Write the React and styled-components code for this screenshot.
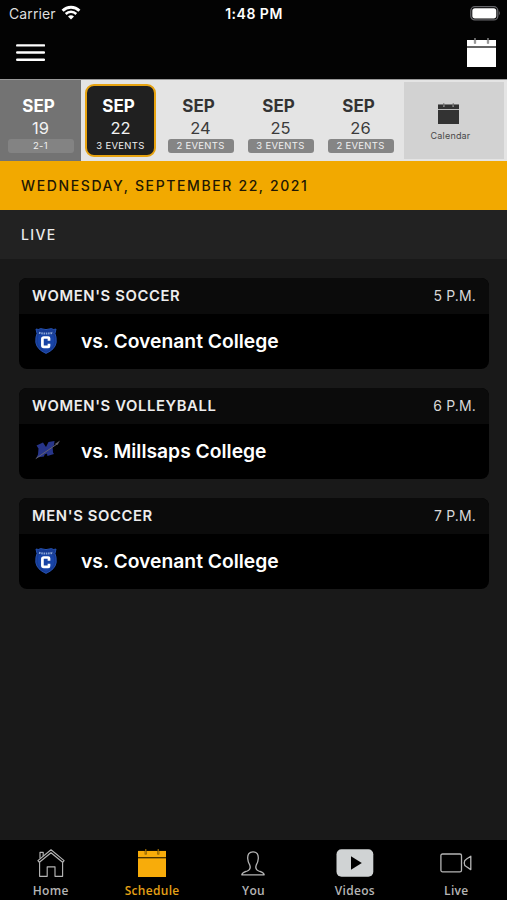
import styled, { createGlobalStyle, css } from 'styled-components';

const days = [
    { month: 'SEP', day: '19', label: '2-1', past: true },
    { month: 'SEP', day: '22', label: '3 EVENTS', selected: true },
    { month: 'SEP', day: '24', label: '2 EVENTS' },
    { month: 'SEP', day: '25', label: '3 EVENTS' },
    { month: 'SEP', day: '26', label: '2 EVENTS' },
];

const events = [
    { sport: "WOMEN'S SOCCER", time: '5 P.M.', title: 'vs. Covenant College', logo: 'covenant' },
    { sport: "WOMEN'S VOLLEYBALL", time: '6 P.M.', title: 'vs. Millsaps College', logo: 'millsaps' },
    { sport: "MEN'S SOCCER", time: '7 P.M.', title: 'vs. Covenant College', logo: 'covenant' },
];

// icons
const WifiIcon = () => (
    <svg width='20' height='16' viewBox='0 0 20 16' fill='none' stroke='#fff'>
        <path d='M1.6 5.7 A12 12 0 0 1 18.4 5.7' strokeWidth='2.9' />
        <path d='M4.7 9 A7.6 7.6 0 0 1 15.3 9' strokeWidth='2.5' />
        <path d='M10 14.6 L7 11.6 A4.3 4.3 0 0 1 13 11.6 Z' fill='#fff' stroke='none' />
    </svg>
);

const BatteryIcon = () => (
    <svg width='31' height='15' viewBox='0 0 31 15'>
        <rect x='0.8' y='0.7' width='27' height='13.2' rx='4' fill='none' stroke='#66666a' strokeWidth='1.3' />
        <rect x='2.3' y='2.2' width='24' height='10.2' rx='2.6' fill='#fff' />
        <path d='M28.9 5 Q30.8 7.2 28.9 9.4 Z' fill='#66666a' />
    </svg>
);

const MenuIcon = () => (
    <svg width='29' height='19' viewBox='0 0 29 19' stroke='#fff' strokeWidth='2.4' strokeLinecap='round'>
        <path d='M1.2 2.4 H28 M1.2 9.5 H28 M1.2 16.8 H28' />
    </svg>
);

const CalendarIcon = ({ width, height, color, line }) => (
    <svg width={width} height={height} viewBox='0 0 29 29' preserveAspectRatio='none'>
        <path d='M0 2 H29 V29 H0 Z' fill={color} />
        <path d='M0 9 H29' stroke={line} strokeWidth='1.4' />
        <path d='M8 2 V5.6 M21 2 V5.6' stroke={line} strokeWidth='2.2' opacity='0.75' />
        <path d='M8 0 V5 M21 0 V5' stroke={color} strokeWidth='1.4' opacity='0.55' />
    </svg>
);

const HomeIcon = () => (
    <svg width='28' height='28' viewBox='0 0 28 28' fill='none' stroke='#b5b5b5' strokeWidth='1.15' strokeLinejoin='round'>
        <path d='M0.9 11.6 L14 0.8 L27.1 11.6 L25.6 13.3 L14 3.8 L2.4 13.3 Z' />
        <path d='M3 9.5 V3.3 H6.2 V7' />
        <path d='M2.6 13.2 V27.3 H10.2 V17.8 H18 V27.3 H25.6 V13.2' />
    </svg>
);

const UserIcon = () => (
    <svg width='24' height='25' viewBox='0 0 24 25' fill='none' stroke='#b5b5b5' strokeWidth='1.3' strokeLinejoin='round'>
        <path d='M12 0.8 C8.1 0.8 6.5 3.6 6.7 7.5 C6.9 11 7.8 12.6 8.8 14.2 C10 17.6 8.8 19 6.3 20 C3.6 21 1.2 21.4 0.8 23.8 H23.2 C22.8 21.4 20.4 21 17.7 20 C15.2 19 14 17.6 15.2 14.2 C16.2 12.6 17.1 11 17.3 7.5 C17.5 3.6 15.9 0.8 12 0.8 Z' />
    </svg>
);

const VideosIcon = () => (
    <svg width='38' height='28' viewBox='0 0 38 28'>
        <rect x='0.5' y='0.3' width='36.8' height='27.4' rx='5' fill='#d0d3d4' />
        <path d='M15 7.2 L25.8 14 L15 20.8 Z' fill='#000' />
    </svg>
);

const LiveIcon = () => (
    <svg width='32' height='20' viewBox='0 0 32 20' fill='none' stroke='#b5b5b5' strokeWidth='1.3' strokeLinejoin='round'>
        <rect x='0.9' y='1' width='20.6' height='17.8' rx='1.6' />
        <path d='M30.8 3.2 V16.6 L26.2 13.5 C23.6 12.3 23.6 7.5 26.2 6.3 Z' />
    </svg>
);

const CovenantLogo = () => (
    <svg width='22' height='26' viewBox='0 0 22 26'>
        <path d='M1 1 Q3.4 2.2 5.6 0.6 Q11 2.6 16.4 0.6 Q18.6 2.2 21 1 L20 5.6 Q21.6 9 21.2 14.5 Q20 21.6 11 25.4 Q2 21.6 0.8 14.5 Q0.4 9 2 5.6 Z' fill='#173b93' stroke='#2957bb' strokeWidth='0.9' />
        <path d='M3.4 7.2 Q11 5.4 18.6 7.2 Q20 15 18 18 Q15.5 21.4 11 23.4 Q6.5 21.4 4 18 Q2 15 3.4 7.2 Z' fill='#1743a6' />
        <path d='M4 4.7 Q11 6.5 18 4.7' fill='none' stroke='#8ca7d8' strokeWidth='2' strokeDasharray='1.5 0.8' />
        <path d='M14 12.8 V10.3 Q14 9.5 13.2 9.5 H8.8 Q7.4 9.5 7.4 10.8 V17.6 Q7.4 18.9 8.8 18.9 H13.2 Q14 18.9 14 18 V15.8' fill='none' stroke='#fff' strokeWidth='2.7' />
    </svg>
);

const MillsapsLogo = () => (
    <svg width='26' height='20' viewBox='0 0 26 20'>
        <path d='M1.5 5.5 L8 2.5 L11 7 L13.5 2 L19.5 1 L19 5.5 L17.6 6.5 L18 12.5 L19 14 L12.4 16 L12 13.6 L9.6 14.4 L9 16.5 L1.5 17.5 L3 14.5 L3.5 8.5 Z' fill='#27358a' />
        <path d='M0.8 18.6 L22.5 3.7' stroke='#66646f' strokeWidth='1' />
        <path d='M19.6 4.2 L25 0.6 L22.6 4.8 Z' fill='#66626a' />
    </svg>
);

const tabs = [
    { name: 'Home', icon: <HomeIcon /> },
    { name: 'Schedule', icon: <CalendarIcon width={28} height={28} color='#f8ac0a' line='#4a3300' />, active: true },
    { name: 'You', icon: <UserIcon /> },
    { name: 'Videos', icon: <VideosIcon /> },
    { name: 'Live', icon: <LiveIcon /> },
];

const EventCard = ({ event }) => (
    <Card>
        <CardHeader>
            <Sport>{event.sport}</Sport>
            <Time>{event.time}</Time>
        </CardHeader>
        <CardBody>
            <LogoBox $wide={event.logo === 'millsaps'}>
                {event.logo === 'covenant' ? <CovenantLogo /> : <MillsapsLogo />}
            </LogoBox>
            <Opponent>{event.title}</Opponent>
        </CardBody>
    </Card>
);

const App = () => {
    return (
        <>
            <GlobalStyle />

            <Screen>
                <StatusBar>
                    <Carrier>Carrier <WifiIcon /></Carrier>
                    <Clock>1:48 PM</Clock>
                    <Battery><BatteryIcon /></Battery>
                </StatusBar>

                <NavBar>
                    <IconButton aria-label='Menu'><MenuIcon /></IconButton>
                    <IconButton aria-label='Calendar'>
                        <CalendarIcon width={29} height={29} color='#fff' line='#222' />
                    </IconButton>
                </NavBar>

                <DateStrip>
                    {days.map(item => (
                        <DayCell key={item.day} $past={item.past}>
                            <DayBox $selected={item.selected}>
                                <Month $light={item.past || item.selected}>{item.month}</Month>
                                <DayNumber $light={item.past || item.selected}>{item.day}</DayNumber>
                                <Badge $past={item.past} $selected={item.selected}>{item.label}</Badge>
                            </DayBox>
                        </DayCell>
                    ))}
                    <CalendarCell>
                        <CalendarIcon width={21} height={21} color='#333' line='#bbb' />
                        <span>Calendar</span>
                    </CalendarCell>
                </DateStrip>

                <DateTitle>WEDNESDAY, SEPTEMBER 22, 2021</DateTitle>
                <SectionTitle>LIVE</SectionTitle>

                <EventList>
                    {events.map(event => <EventCard key={event.sport} event={event} />)}
                </EventList>

                <TabBar>
                    {tabs.map(tab => (
                        <Tab key={tab.name} $active={tab.active}>
                            <TabIcon>{tab.icon}</TabIcon>
                            <span>{tab.name}</span>
                        </Tab>
                    ))}
                </TabBar>
            </Screen>
        </>
    )
}

export default App;


const GlobalStyle = createGlobalStyle`
    * {
        box-sizing: border-box;
    }

    body {
        margin: 0;
        background-color: #191919;
        font-family: Inter, 'Liberation Sans', sans-serif;
    }

    svg {
        display: block;
        flex-shrink: 0;
    }
`

const Screen = styled.main`
    display: flex;
    flex-direction: column;
    width: 507px;
    height: 900px;
    overflow: hidden;
    background-color: #191919;
    white-space: nowrap;
`

const StatusBar = styled.header`
    display: grid;
    grid-template-columns: 1fr auto 1fr;
    align-items: center;
    height: 28px;
    padding: 0 6px 2px 9px;
    background-color: #030303;
    color: #fff;
`

const Carrier = styled.div`
    display: flex;
    align-items: center;
    gap: 5px;
    font-size: 14px;
    letter-spacing: 0.1px;
    color: #dedede;
`

const Clock = styled.div`
    margin-right: 2px;
    font-size: 14px;
    font-weight: 600;
    letter-spacing: 0.5px;
`

const Battery = styled.div`
    display: flex;
    justify-content: flex-end;
`

const NavBar = styled.nav`
    display: flex;
    align-items: center;
    justify-content: space-between;
    height: 51px;
    padding: 0 11px 2px 16px;
    background-color: #030303;
`

const IconButton = styled.button`
    padding: 0;
    border: none;
    background: transparent;
`

const DateStrip = styled.section`
    display: flex;
    height: 82px;
    padding-right: 3px;
    background-color: #e4e4e4;
    border-top: 1px solid #999;
`

const DayCell = styled.div`
    flex-shrink: 0;
    width: 80px;
    padding: 4px 5px 4px 4px;

    ${({ $past }) => $past && css`
        width: 81px;
        padding-left: 5px;
        background-color: #737373;
    `}
`

const DayBox = styled.div`
    display: flex;
    flex-direction: column;
    align-items: center;
    height: 73px;
    padding-top: 10px;
    border: 2px solid transparent;
    border-radius: 9px;

    ${({ $selected }) => $selected && css`
        border-color: #e7a310;
        background-color: #202020;
    `}
`

const Month = styled.div`
    margin-right: 4px;
    font-size: 17px;
    font-weight: 700;
    line-height: 20px;
    color: ${({ $light }) => $light ? '#fff' : '#333'};
`

const DayNumber = styled.div`
    margin-top: 2px;
    font-size: 16.5px;
    line-height: 20px;
    color: ${({ $light }) => $light ? '#f2f2f2' : '#3b3b3b'};
`

const Badge = styled.div`
    width: 66px;
    height: 14px;
    margin: 1px -4px 0;
    border-radius: 3px;
    background-color: ${({ $past, $selected }) => $selected ? 'transparent' : $past ? '#838383' : '#858585'};
    font-size: 9.5px;
    line-height: 14px;
    letter-spacing: 0.3px;
    text-align: center;
    color: #f0f0f0;
`

const CalendarCell = styled.div`
    display: flex;
    flex-direction: column;
    align-items: center;
    flex: 1;
    margin: 2px 0 2px 3px;
    padding: 21px 11px 0 0;
    background-color: #d2d2d2;

    span {
        margin: 6px -4px 0 0;
        font-size: 9px;
        line-height: 12px;
        letter-spacing: 0.2px;
        color: #484848;
    }
`

const DateTitle = styled.h1`
    display: flex;
    align-items: center;
    height: 49px;
    margin: 0;
    padding: 0 21px 1px;
    background-color: #f2a900;
    color: #211704;
    font-size: 14px;
    font-weight: 500;
    letter-spacing: 1.62px;
`

const SectionTitle = styled.h2`
    display: flex;
    align-items: center;
    height: 49px;
    margin: 0;
    padding: 0 21px 1px;
    background-color: #222;
    color: #ececec;
    font-size: 14px;
    font-weight: 500;
    letter-spacing: 1.4px;
`

const EventList = styled.section`
    display: flex;
    flex: 1;
    flex-direction: column;
    gap: 19px;
    padding: 19px 18px 0 19px;
`

const Card = styled.article`
    height: 91px;
    border-radius: 8px;
    overflow: hidden;
    background-color: #000;
`

const CardHeader = styled.div`
    display: flex;
    align-items: center;
    justify-content: space-between;
    height: 36px;
    padding: 0 13px 2px;
    background-color: #0b0b0b;
`

const Sport = styled.span`
    margin-top: 2px;
    font-size: 14.8px;
    font-weight: 600;
    letter-spacing: 0.62px;
    color: #ededed;
`

const Time = styled.span`
    font-size: 14px;
    letter-spacing: 0.15px;
    color: #d8d8d8;
`

const CardBody = styled.div`
    display: flex;
    align-items: center;
    height: 55px;
    padding-left: 14px;
`

const LogoBox = styled.div`
    display: flex;
    justify-content: center;
    width: 26px;
    margin: ${({ $wide }) => $wide ? '-4px 20px 0 2px' : '-2px 22px 0 0'};
`

const Opponent = styled.strong`
    margin-top: -2px;
    font-size: 19.3px;
    font-weight: 600;
    color: #fff;
`

const TabBar = styled.footer`
    display: grid;
    grid-template-columns: repeat(5, 1fr);
    height: 60px;
    background-color: #000;
`

const Tab = styled.div`
    display: flex;
    flex-direction: column;
    align-items: center;
    padding-top: 9px;
    color: ${({ $active }) => $active ? '#e5a116' : '#b5b5b5'};
    font: 600 12px/16px 'Open Sans', sans-serif;

    span {
        margin-top: 6px;
        letter-spacing: 0.3px;
    }
`

const TabIcon = styled.div`
    display: flex;
    align-items: center;
    height: 28px;
`
